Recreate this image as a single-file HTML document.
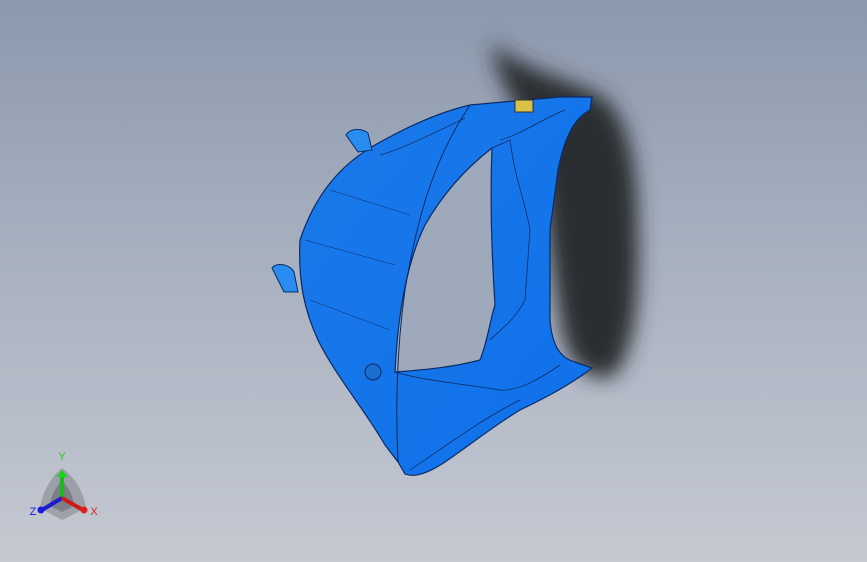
<!DOCTYPE html>
<html><head><meta charset="utf-8"><style>
html,body{margin:0;padding:0;}
body{width:867px;height:562px;overflow:hidden;background:linear-gradient(180deg,#8b99ad 0%,#a7b0bf 45%,#c5c9d2 100%);font-family:"Liberation Sans",sans-serif;}
svg{position:absolute;left:0;top:0}
</style></head><body>
<svg width="867" height="562" viewBox="0 0 867 562">
<defs>
<filter id="b" x="-50%" y="-50%" width="200%" height="200%"><feGaussianBlur stdDeviation="10"/></filter>
<linearGradient id="bl" x1="0" y1="0" x2="1" y2="1"><stop offset="0" stop-color="#1a7aea"/><stop offset="1" stop-color="#0f70ea"/></linearGradient>
</defs>
<path d="M492,42 C520,70 560,75 600,95 C630,115 638,170 638,230 C640,300 635,350 615,375 C595,385 575,370 565,345 C552,290 548,210 535,150 C520,110 495,80 492,42Z" fill="#2a2d31" filter="url(#b)"/>
<path d="M300,240 C315,195 340,165 375,145 C410,125 440,112 470,105 L560,97 L592,97 L590,110 C575,118 565,135 558,170 L550,230 L550,320 C552,345 560,358 575,362 L592,368 C570,385 545,398 520,410 C495,425 470,445 445,462 C430,472 415,478 405,474 L398,462 L385,445 C365,410 335,375 318,340 C304,310 298,280 300,240Z" fill="url(#bl)" stroke="#0a2b66" stroke-width="1.2"/>
<path d="M492,148 C470,165 445,190 425,225 C408,260 398,310 395,372 C420,370 450,368 480,360 C488,340 490,320 495,305 C492,260 490,200 492,148Z" fill="#9eaabb" stroke="#0a2b66" stroke-width="1.2"/>
<path d="M492,148 L510,140 C515,180 525,200 530,230 L525,300 C515,320 500,330 490,340" fill="none" stroke="#0a2b66" stroke-width="0.8"/>
<path d="M500,140 C520,135 540,120 565,110" fill="none" stroke="#0a2b66" stroke-width="0.8"/>
<path d="M395,372 C420,380 470,385 500,390 C520,392 545,375 560,365" fill="none" stroke="#0a2b66" stroke-width="0.8"/>
<path d="M410,470 C440,450 480,420 520,400" fill="none" stroke="#0a2b66" stroke-width="0.8"/>
<path d="M470,105 C440,150 420,200 405,290 C398,340 395,400 398,462" fill="none" stroke="#0a2b66" stroke-width="1"/>
<path d="M380,155 C400,150 430,135 465,118" fill="none" stroke="#0a2b66" stroke-width="0.7"/>
<path d="M330,190 L410,215 M305,240 L395,265 M310,300 L390,330" fill="none" stroke="#0a2b66" stroke-width="0.5"/>
<path d="M346,135 C350,128 362,128 368,133 L372,150 L358,152 Z" fill="#2a8cf0" stroke="#0a2b66"/>
<path d="M272,268 C276,262 290,264 294,272 L298,292 L284,292 Z" fill="#2a8cf0" stroke="#0a2b66"/>
<rect x="515" y="100" width="18" height="12" fill="#d8c24a" stroke="#333"/>
<circle cx="373" cy="372" r="8" fill="#1a6fd0" stroke="#0a2b66"/>
<path d="M62,468 C78,480 84,495 86,508 L62,520 L40,508 C42,495 48,480 62,468Z" fill="#000" opacity="0.18"/>
<path d="M62,480 C70,490 74,498 74,506 L62,512 L50,506 C50,498 54,490 62,480Z" fill="#000" opacity="0.2"/>
<line x1="62" y1="498" x2="62" y2="476" stroke="#1cb81c" stroke-width="4"/>
<path d="M56,477 L68,477 L62,470Z" fill="#22d022"/>
<line x1="62" y1="498" x2="42" y2="510" stroke="#1a1ad0" stroke-width="4"/>
<circle cx="41" cy="510" r="3.5" fill="#1a1ad8"/>
<line x1="62" y1="498" x2="83" y2="510" stroke="#d01a1a" stroke-width="4"/>
<circle cx="84" cy="510" r="3.5" fill="#e02020"/>
<text x="62" y="460" font-size="11" fill="#22cc22" text-anchor="middle" font-family="Liberation Sans">Y</text>
<text x="33" y="515" font-size="11" fill="#1a1ae0" text-anchor="middle" font-family="Liberation Sans">Z</text>
<text x="94" y="515" font-size="11" fill="#e02020" text-anchor="middle" font-family="Liberation Sans">X</text>
</svg>
</body></html>
